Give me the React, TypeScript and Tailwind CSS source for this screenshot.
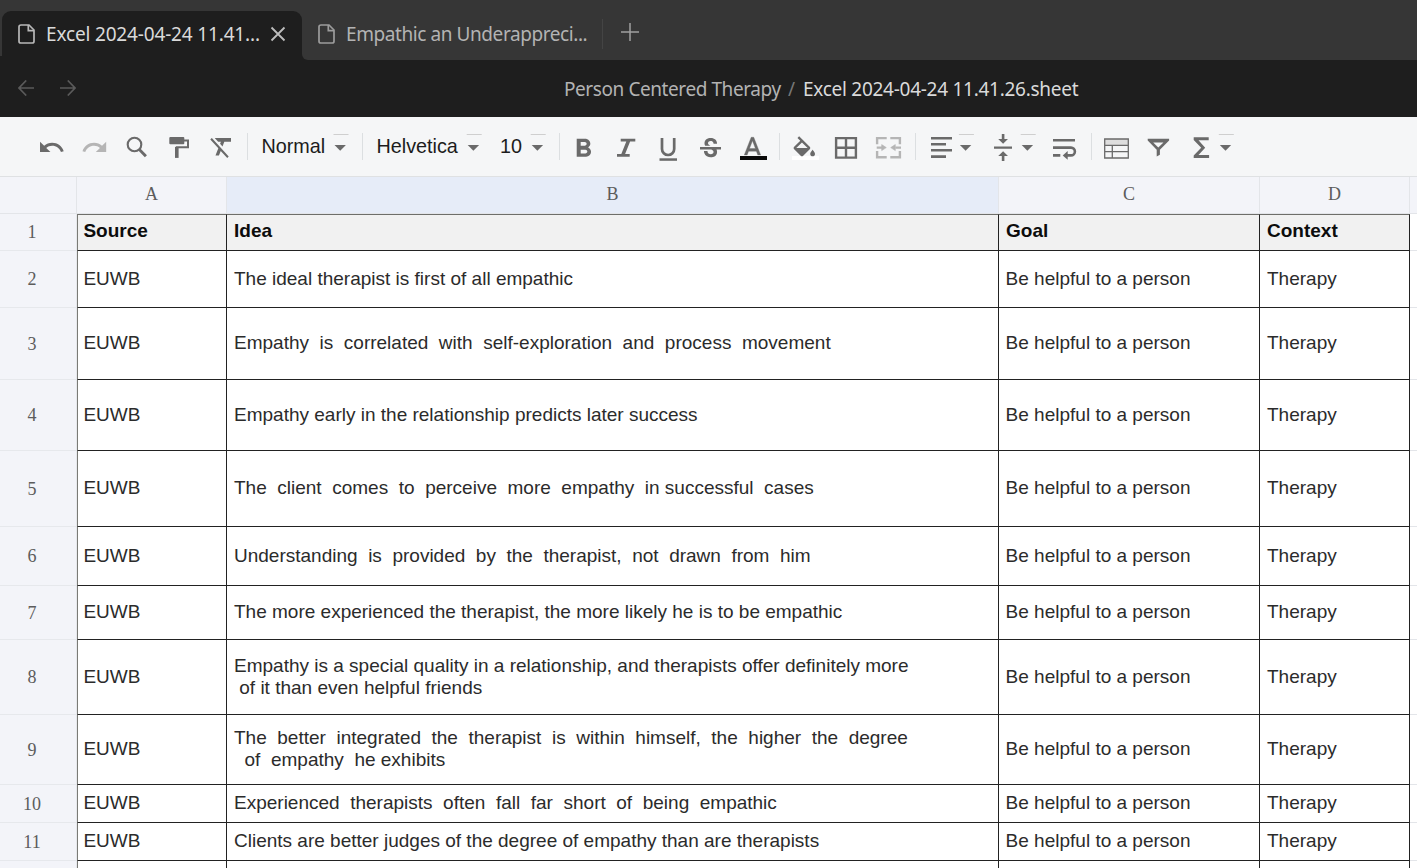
import type { ReactNode } from "react";

const INK = "#6a6a6a";
const MUTED = "#b5b5b5";

/* Toolbar artwork shares one coordinate space: x runs along the bar, y from its top edge. */
function Tool({ x, w, children }: { x: number; w: number; children: ReactNode }) {
  return (
    <button className="block h-[59px] shrink-0">
      <svg width={w} height={59} viewBox={`${x} 0 ${w} 59`} fill={INK} className="block">
        {children}
      </svg>
    </button>
  );
}

function Caret({ x }: { x: number }) {
  return (
    <>
      <rect x={x - 1} y={17} width={15} height={1} fill="#cfcfcf" />
      <path d={`M${x} 27.9h11.4l-5.7 5.8z`} />
    </>
  );
}

function Sep() {
  return <div className="h-[27px] w-px shrink-0 bg-[#dcdfe1]" />;
}

function FileIcon() {
  return (
    <svg width="17" height="20" viewBox="0 0 17 20" fill="none" stroke="currentColor" strokeWidth="1.7" className="shrink-0">
      <path d="M3 1h8l5 5v11.2q0 1.8-1.8 1.8H2.8Q1 19 1 17.2V2.8Q1 1 3 1z" />
      <path d="M10.3 1v5.7H16" />
    </svg>
  );
}

const label = "pb-[2px] text-left font-['Liberation_Sans',sans-serif] text-[19.8px] leading-[24px] text-[#1c1c1c]";

function Toolbar() {
  return (
    <div className="flex h-[60px] shrink-0 items-center border-b border-[#dfe1e3] bg-[#f5f6f7] pl-[31px]">
      <Tool x={31} w={42}>
        <path transform="translate(37.7 16.6) scale(1.157)" d="M12.5 8c-2.65 0-5.05.99-6.9 2.6L2 7v9h9l-3.62-3.62c1.39-1.16 3.16-1.88 5.12-1.88 3.54 0 6.55 2.31 7.6 5.5l2.37-.78C21.08 11.03 17.15 8 12.5 8z" />
      </Tool>
      <Tool x={73} w={42}>
        <path fill={MUTED} transform="translate(108.5 16.6) scale(-1.157 1.157)" d="M12.5 8c-2.65 0-5.05.99-6.9 2.6L2 7v9h9l-3.62-3.62c1.39-1.16 3.16-1.88 5.12-1.88 3.54 0 6.55 2.31 7.6 5.5l2.37-.78C21.08 11.03 17.15 8 12.5 8z" />
      </Tool>
      <Tool x={115} w={42}>
        <circle cx="134.5" cy="27.5" r="6.8" fill="none" stroke={INK} strokeWidth="2.1" />
        <path d="M139.1 32.2l6.8 7" stroke={INK} strokeWidth="2.9" />
      </Tool>
      <Tool x={157} w={42}>
        <rect x="169.3" y="20" width="15" height="7.3" rx="1" />
        <path d="M184 23.6h4V30.3h-11.2v2" fill="none" stroke={INK} strokeWidth="2" />
        <rect x="175" y="30" width="3.6" height="10.9" />
      </Tool>
      <Tool x={199} w={48}>
        <path transform="translate(208 14.75) scale(1.15 1.25)" d="M3.27 5L2 6.27l6.97 6.97L6.5 19h3l1.57-3.66L16.73 21 18 19.73 3.55 5.27 3.27 5zM6 5v.18L8.82 8h2.4l-.72 1.68 2.1 2.1L14.21 8H20V5H6z" />
      </Tool>
      <Sep />
      <button className={`${label} w-[80px] pl-[13.5px]`}>Normal</button>
      <Tool x={328} w={34}>
        <Caret x={334.5} />
      </Tool>
      <Sep />
      <button className={`${label} w-[98px] pl-[13.5px]`}>Helvetica</button>
      <Tool x={461} w={34}>
        <Caret x={467.7} />
      </Tool>
      <button className={`${label} w-[30px] pl-[5px]`}>10</button>
      <Tool x={525} w={34}>
        <Caret x={531.7} />
      </Tool>
      <Sep />
      <Tool x={560} w={45}>
        <path transform="translate(567.4 16.5) scale(1.33 1.29)" d="M15.6 10.79c.97-.67 1.65-1.77 1.65-2.79 0-2.26-1.75-4-4-4H7v14h7.04c2.09 0 3.71-1.7 3.71-3.79 0-1.52-.86-2.82-2.15-3.42zM10 6.5h3c.83 0 1.5.67 1.5 1.5s-.67 1.5-1.5 1.5h-3v-3zm3.5 9H10v-3h3.5c.83 0 1.5.67 1.5 1.5s-.67 1.5-1.5 1.5z" />
      </Tool>
      <Tool x={605} w={42}>
        <path d="M620.7 21.7H635.3V24.4H630.1L625.1 37H629.7V39.7H617V37H621.3L626.3 24.4H620.7z" />
      </Tool>
      <Tool x={647} w={42}>
        <path d="M662 21v10.9a6.1 6.1 0 0 0 12.2 0V21" fill="none" stroke={INK} strokeWidth="2.7" />
        <rect x="659.5" y="41.3" width="17.5" height="2.5" />
      </Tool>
      <Tool x={689} w={42}>
        <path transform="translate(696.5 17.1) scale(1.167 1.29)" d="M6.85 7.08C6.85 4.37 9.45 3 12.24 3c1.64 0 3 .49 3.9 1.28.77.65 1.46 1.73 1.46 3.24h-3.01c0-.31-.05-.59-.15-.85-.29-.86-1.2-1.28-2.25-1.28-1.86 0-2.34 1.02-2.34 1.7 0 .48.25.88.74 1.21.38.25.77.48 1.41.7H7.39c-.21-.34-.54-.89-.54-1.92zM21 12v-2H3v2h9.62c1.15.45 1.96.75 1.96 1.97 0 1-.81 1.67-2.28 1.67-1.54 0-2.93-.54-2.93-2.51H6.4c0 .55.08 1.13.24 1.58.81 2.29 3.29 3.3 5.67 3.3 2.27 0 5.3-.89 5.3-4.05 0-.3-.01-1.16-.48-1.94H21V12z" />
      </Tool>
      <Tool x={731} w={48}>
        <path transform="translate(737.4 16.5) scale(1.256 1.26)" d="M11 3L5.5 17h2.25l1.12-3h6.25l1.12 3h2.25L13 3h-2zm-1.38 9L12 5.67 14.38 12H9.62z" stroke={INK} strokeWidth=".3" />
        <rect x="740" y="39" width="27" height="4" fill="#0a0a0a" />
      </Tool>
      <Sep />
      <Tool x={780} w={45}>
        <rect x="792" y="39" width="27" height="4" fill="#fff" />
        <path transform="translate(790.1 19.3) scale(1.185 1.176)" d="M16.56 8.94L7.62 0 6.21 1.41l2.38 2.38-5.15 5.15c-.59.59-.59 1.54 0 2.12l5.5 5.5c.29.29.68.44 1.06.44s.77-.15 1.06-.44l5.5-5.5c.59-.58.59-1.53 0-2.12zM5.21 10L10 5.21 14.79 10H5.21zM19 11.5s-2 2.17-2 3.5c0 1.1.9 2 2 2s2-.9 2-2c0-1.33-2-3.5-2-3.5z" />
      </Tool>
      <Tool x={825} w={42}>
        <path d="M836.1 21.1h19.8v19.5h-19.8zM846 21v20M836 30.8h20" fill="none" stroke={INK} strokeWidth="2.4" />
      </Tool>
      <Tool x={867} w={48}>
        <path d="M886.7 21.1h-9.6v6.2M890.3 21.1h9.6v6.2M886.7 40.2h-9.6V34M890.3 40.2h9.6V34M876.7 30.6h5.6M901 30.6h-5.6" fill="none" stroke={MUTED} strokeWidth="2.4" />
        <path d="M881.7 27.6l4.6 3-4.6 3zM895.3 27.6l-4.6 3 4.6 3z" fill={MUTED} stroke={MUTED} strokeWidth=".6" />
      </Tool>
      <Sep />
      <Tool x={916} w={64}>
        <path d="M931 20h21v2.6h-21zM931 26h15v2.6h-15zM931 32h21v2.6h-21zM931 38.3h15v2.6h-15z" />
        <Caret x={959.9} />
      </Tool>
      <Tool x={980} w={62}>
        <path d="M994 29.4h18v2.4h-18zM1001.8 17h2.6v5h3.6l-4.9 4.7-4.9-4.7h3.6zM1001.8 44h2.6v-5h3.6l-4.9-4.7-4.9 4.7h3.6z" />
        <Caret x={1021.7} />
      </Tool>
      <Tool x={1042} w={49}>
        <path d="M1053 23.3h22M1053 30.6h18a3.9 3.9 0 0 1 0 7.8h-4M1053 38.4h7.3" fill="none" stroke={INK} strokeWidth="2.6" />
        <path d="M1062.7 38.4l5-4.4v8.8z" />
      </Tool>
      <Sep />
      <Tool x={1092} w={45}>
        <rect x="1105" y="22" width="23.5" height="6" fill="#dedede" />
        <path d="M1104.7 22h23.6v19h-23.6zM1104.7 28.3h23.6M1104.7 34.6h23.6M1112.3 28.3V41" fill="none" stroke={INK} strokeWidth="1.3" />
      </Tool>
      <Tool x={1137} w={44}>
        <path fillRule="evenodd" d="M1147.7 21.7h21.4v1.8l-9.2 9.2v5l-3.2 1.8v-6.8l-9-9.2zM1153.2 25.6l5.1 4.9 5.2-4.9z" />
      </Tool>
      <Tool x={1181} w={60}>
        <path d="M1193.7 20.3h15v3h-10.2l6.7 7.4-6.7 7.4h10.6v3h-15.4v-2.6l7.5-7.8-7.5-7.8z" />
        <Caret x={1219.8} />
      </Tool>
    </div>
  );
}

type Row = { h: string; idea: string };

const rows: Row[] = [
  { h: "h-[57px]", idea: "The ideal therapist is first of all empathic" },
  { h: "h-[72px]", idea: "Empathy  is  correlated  with  self-exploration  and  process  movement" },
  { h: "h-[71px]", idea: "Empathy early in the relationship predicts later success" },
  { h: "h-[76px]", idea: "The  client  comes  to  perceive  more  empathy  in successful  cases" },
  { h: "h-[59px]", idea: "Understanding  is  provided  by  the  therapist,  not  drawn  from  him" },
  { h: "h-[54px]", idea: "The more experienced the therapist, the more likely he is to be empathic" },
  { h: "h-[75px]", idea: "Empathy is a special quality in a relationship, and therapists offer definitely more\n of it than even helpful friends" },
  { h: "h-[70px]", idea: "The  better  integrated  the  therapist  is  within  himself,  the  higher  the  degree\n  of  empathy  he exhibits" },
  { h: "h-[38px]", idea: "Experienced  therapists  often  fall  far  short  of  being  empathic" },
  { h: "h-[38px]", idea: "Clients are better judges of the degree of empathy than are therapists" },
];

const cols = "grid grid-cols-[77px_150px_772px_261px_150px_1fr]";
const num = "flex items-center justify-center border-b border-r border-[#e6e8ec] bg-[#f3f4f9] pr-[12px] pt-px font-['Liberation_Serif',serif] text-[18px] text-[#5c5c5c]";
const cell = "flex items-center whitespace-pre border-b border-r border-[#222222] leading-[22px]";
const first = "border-l border-l-[#7a7a76] pl-[5.4px]";

function Sheet() {
  return (
    <div className="flex-1 overflow-hidden bg-white font-['Liberation_Sans',Arial,sans-serif] text-[19px] text-[#2b2b2b]">
      <div className={`${cols} h-[37px] bg-[#f3f4f9] font-['Liberation_Serif',serif] text-[18px] text-[#5c5c5c]`}>
        <div className="border-b border-r border-[#e3e5e9]" />
        <div className="flex items-center justify-center border-b border-r border-[#e3e5e9] pb-[2px]">A</div>
        <div className="flex items-center justify-center border-b border-r border-[#e3e5e9] bg-[#e6ecf8] pb-[2px]">B</div>
        <div className="flex items-center justify-center border-b border-r border-[#e3e5e9] pb-[2px]">C</div>
        <div className="flex items-center justify-center border-b border-r border-[#e3e5e9] pb-[2px]">D</div>
        <div className="border-b border-[#e3e5e9]" />
      </div>
      <div className={`${cols} h-[37px] font-bold text-[#0c0c0c]`}>
        <div className={`${num} font-normal`}>1</div>
        {["Source", "Idea", "Goal", "Context"].map((t, i) => (
          <div key={t} className={`${cell} ${i === 0 ? first : "pl-[7px]"} border-t border-t-[#6e6e6a] bg-[#f1f1f1] pb-[4px]`}>{t}</div>
        ))}
        <div className="border-b border-[#e3e5e9]" />
      </div>
      {rows.map((r, i) => (
        <div key={i} className={`${cols} ${r.h}`}>
          <div className={num}>{i + 2}</div>
          <div className={`${cell} ${first} pb-px`}>EUWB</div>
          <div className={`${cell} pb-px pl-[7px]`}>{r.idea}</div>
          <div className={`${cell} pb-px pl-[6.6px]`}>Be helpful to a person</div>
          <div className={`${cell} pb-px pl-[7px]`}>Therapy</div>
          <div className="border-b border-[#e3e5e9]" />
        </div>
      ))}
      <div className={`${cols} h-[37px]`}>
        <div className={num} />
        <div className={`${cell} ${first}`} />
        <div className={cell} />
        <div className={cell} />
        <div className={cell} />
        <div />
      </div>
    </div>
  );
}

export default function App() {
  return (
    <div className="flex h-[868px] w-[1417px] flex-col overflow-hidden bg-white">
      <div className="flex h-[60px] shrink-0 items-end bg-[#363636] font-['Noto_Sans',sans-serif] text-[19px] text-[#b3b3b3]">
        <div className="h-[4px] w-[2px] bg-[#1e1e1e]" />
        <div className="flex h-[49px] w-[300px] items-center rounded-t-[9px] bg-[#1e1e1e] pb-[3px] pl-[16px] text-[#dadada]">
          <span className="text-[#b8b8b8]"><FileIcon /></span>
          <span className="ml-[11px] w-[216px] whitespace-nowrap tracking-[-0.16px]">Excel 2024-04-24 11.41...</span>
          <svg width="16" height="16" viewBox="0 0 16 16" stroke="#bdbdbd" strokeWidth="1.8" className="ml-[8px]">
            <path d="M1.5 1.5l13 13M14.5 1.5l-13 13" />
          </svg>
        </div>
        <div className="h-[49px] w-[6px] bg-[#1e1e1e]">
          <div className="h-[49px] w-[6px] rounded-bl-[6px] bg-[#363636]" />
        </div>
        <div className="flex h-[49px] items-center pb-[3px] pl-[10px]">
          <span className="text-[#9c9c9c]"><FileIcon /></span>
          <span className="ml-[11px] w-[256px] whitespace-nowrap tracking-[-0.42px]">Empathic an Underappreci...</span>
          <div className="h-[30px] w-px bg-[#444444]" />
          <svg width="18" height="18" viewBox="0 0 18 18" stroke="#a0a0a0" strokeWidth="1.5" className="mb-[4px] ml-[18px]">
            <path d="M9 0v18M0 9h18" />
          </svg>
        </div>
      </div>
      <div className="flex h-[57px] shrink-0 items-center bg-[#1e1e1e] pl-[18px] font-['Noto_Sans',sans-serif] text-[19px]">
        <svg width="58" height="16" viewBox="0 0 58 16" fill="none" stroke="#5a5a5a" strokeWidth="1.7" className="mb-px">
          <path d="M8.2.5L1 8l7.2 7.5M1 8h15M49.8.5L57 8l-7.2 7.5M57 8H42" />
        </svg>
        <div className="ml-[488px] flex whitespace-pre pt-px">
          <span className="w-[224px] tracking-[-0.42px] text-[#b3b3b3]">Person Centered Therapy</span>
          <span className="w-[15px] text-[#777777]">/</span>
          <span className="tracking-[-0.27px] text-[#dadada]">Excel 2024-04-24 11.41.26.sheet</span>
        </div>
      </div>
      <Toolbar />
      <Sheet />
    </div>
  );
}
